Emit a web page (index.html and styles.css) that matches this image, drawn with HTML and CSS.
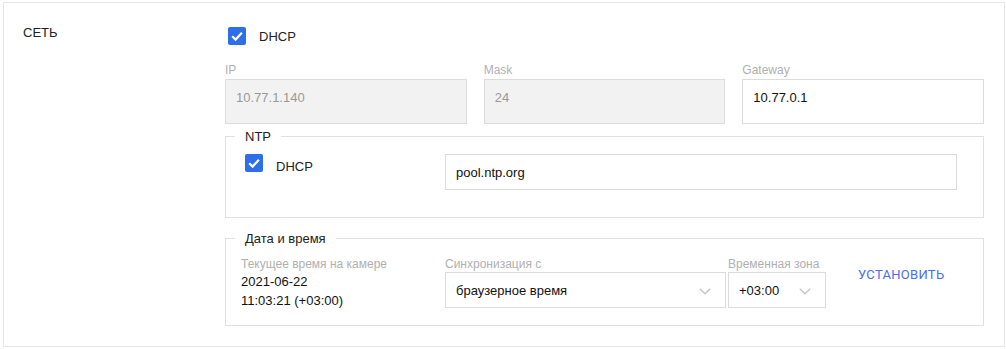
FILE: index.html
```html
<!DOCTYPE html>
<html lang="ru">
<head>
  <meta charset="UTF-8">
  <title>Настройки сети</title>
  <link rel="stylesheet" href="styles.css">
</head>
<body>
  <div class="settings-card">
    <div class="section-title">СЕТЬ</div>
    <div class="section-body">
      <!-- DHCP -->
      <label class="check-row">
        <span class="checkbox">
          <svg width="18" height="18" viewBox="0 0 18 18"><path d="M4.2 9.3 L7.6 12.6 L13.9 5.8" fill="none" stroke="#fff" stroke-width="2.2"/></svg>
        </span>
        <span class="check-text">DHCP</span>
      </label>

      <div class="fields">
        <div class="field">
          <div class="field-label">IP</div>
          <input class="text-input" type="text" value="10.77.1.140" disabled>
        </div>
        <div class="field">
          <div class="field-label">Mask</div>
          <input class="text-input" type="text" value="24" disabled>
        </div>
        <div class="field">
          <div class="field-label">Gateway</div>
          <input class="text-input" type="text" value="10.77.0.1">
        </div>
      </div>

      <!-- NTP -->
      <fieldset class="group ntp-group">
        <legend>NTP</legend>
        <div class="ntp-row">
          <label class="check-row ntp-check">
            <span class="checkbox">
              <svg width="18" height="18" viewBox="0 0 18 18"><path d="M4.2 9.3 L7.6 12.6 L13.9 5.8" fill="none" stroke="#fff" stroke-width="2.2"/></svg>
            </span>
            <span class="check-text">DHCP</span>
          </label>
          <input class="text-input ntp-input" type="text" value="pool.ntp.org">
        </div>
      </fieldset>

      <!-- Date and time -->
      <fieldset class="group time-group">
        <legend>Дата и время</legend>
        <div class="time-row">
          <div class="time-current">
            <div class="field-label">Текущее время на камере</div>
            <div class="time-value">2021-06-22<br>11:03:21 (+03:00)</div>
          </div>
          <div class="time-sync">
            <div class="field-label">Синхронизация с</div>
            <div class="select sync-select">
              <span>браузерное время</span>
              <svg width="12" height="7" viewBox="0 0 12 7"><polyline points="0.8,0.8 6,5.8 11.2,0.8" fill="none" stroke="#c8c8c8" stroke-width="1.5"/></svg>
            </div>
          </div>
          <div class="time-zone">
            <div class="field-label">Временная зона</div>
            <div class="select zone-select">
              <span>+03:00</span>
              <svg width="12" height="7" viewBox="0 0 12 7"><polyline points="0.8,0.8 6,5.8 11.2,0.8" fill="none" stroke="#c8c8c8" stroke-width="1.5"/></svg>
            </div>
          </div>
          <button class="link-button">Установить</button>
        </div>
      </fieldset>
    </div>
  </div>
</body>
</html>
```

FILE: styles.css
```css
body {
  margin: 0;
  background: #fff;
  font-family: 'Liberation Sans', Arial, sans-serif;
  color: #222;
}

.settings-card {
  width: 1002px;
  margin: 2px 0 0 3px;
  padding: 22px 0 20px 19px;
  border: 1px solid #e6e6e6;
  box-sizing: border-box;
  display: flex;
}

.section-title {
  width: 202px;
  font-size: 13px;
  line-height: 15px;
  color: #222;
}

.section-body {
  width: 759px;
}

.check-row {
  display: flex;
  align-items: center;
  margin-top: 2px;
  font-size: 13px;
  line-height: 15px;
  cursor: pointer;
}

.checkbox {
  width: 18px;
  height: 18px;
  border-radius: 2px;
  background: #2d6ee9;
  margin: 0 13px 0 3px;
  display: flex;
}

.fields {
  display: grid;
  grid-template-columns: repeat(3, 1fr);
  gap: 17px;
  margin-top: 18px;
}

.field-label {
  font-size: 12px;
  line-height: 14px;
  color: #b0b0b0;
  white-space: nowrap;
}

.fields .field-label {
  margin-bottom: 2px;
}

.text-input {
  width: 100%;
  height: 45px;
  box-sizing: border-box;
  border: 1px solid #dcdcdc;
  padding: 0 10px 9px;
  font-family: inherit;
  font-size: 13px;
  color: #111;
  background: #fff;
  outline: none;
}

.text-input:disabled {
  background: #f2f2f2;
  color: #999;
}

.group {
  border: 1px solid #e0e0e0;
  margin: 5px 0 0;
  min-width: 0;
}

.group legend {
  font-size: 13px;
  line-height: 15px;
  padding: 0 10px;
  color: #222;
}

.ntp-group {
  padding: 10px 0 27px 19px;
}

.ntp-group legend {
  margin-left: -10px;
}

.ntp-row {
  display: flex;
  align-items: flex-start;
}

.ntp-check {
  width: 200px;
  margin-top: 0;
  align-items: flex-start;
}

.ntp-check .checkbox {
  margin: 0 13px 0 0;
}

.ntp-check .check-text {
  padding-top: 5px;
}

.ntp-input {
  width: 512px;
  height: 36px;
  padding: 0 10px;
}

.time-group {
  margin-top: 13px;
  padding: 11px 0 15px 15px;
}

.time-group legend {
  margin-left: -6px;
}

.time-row {
  display: flex;
  align-items: flex-start;
}

.time-current {
  width: 204px;
}

.time-value {
  font-size: 13px;
  line-height: 19px;
  color: #111;
}

.time-row .field-label {
  margin-bottom: 1px;
}

.select {
  height: 36px;
  box-sizing: border-box;
  border: 1px solid #dcdcdc;
  padding: 0 14px 0 10px;
  display: flex;
  align-items: center;
  justify-content: space-between;
  font-size: 13px;
  color: #111;
}

.select svg {
  margin-top: 3px;
}

.sync-select {
  width: 281px;
}

.time-zone {
  margin-left: 2px;
}

.zone-select {
  width: 98px;
}

.link-button {
  margin: 10px 0 0 32px;
  padding: 0;
  border: none;
  background: none;
  font-family: Roboto, 'Liberation Sans', sans-serif;
  font-size: 13px;
  line-height: 15px;
  letter-spacing: 0.3px;
  text-transform: uppercase;
  color: #4b6cf2;
  cursor: pointer;
}
```
